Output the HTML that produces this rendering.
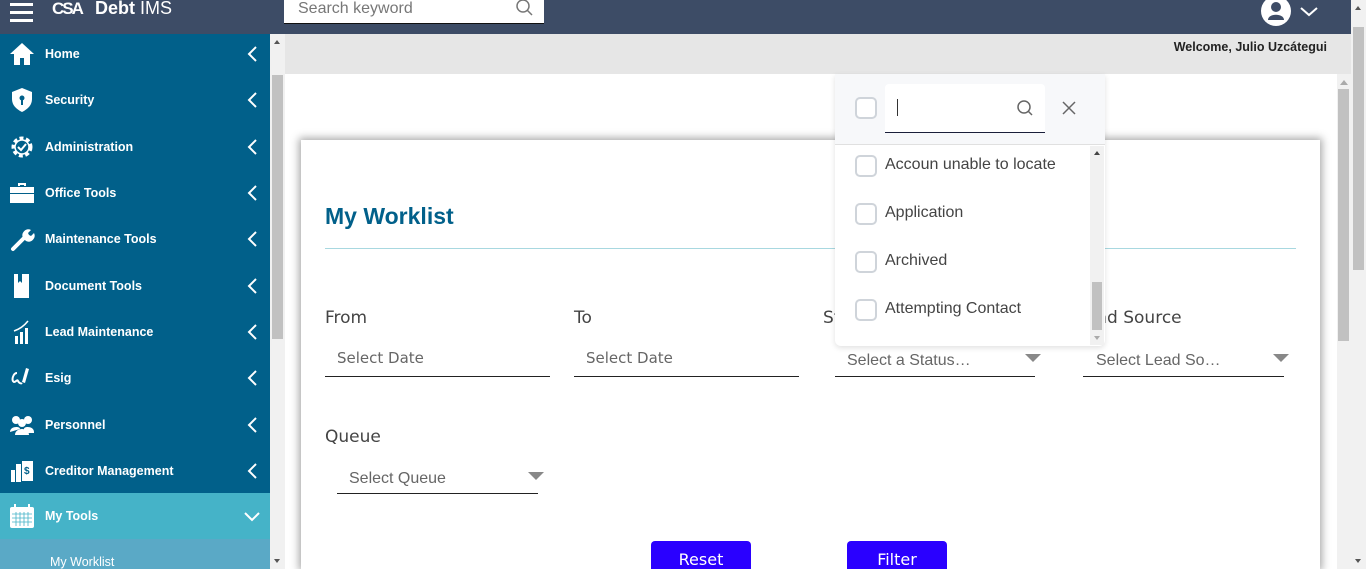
<!DOCTYPE html>
<html style="overflow:hidden"><head><meta charset="utf-8"><style>
*{box-sizing:border-box;margin:0;padding:0}
html,body{width:1366px;height:569px;overflow:hidden}
body{font-family:"DejaVu Sans","Liberation Sans",sans-serif;background:#fff;position:relative}
.hdr{position:absolute;left:0;top:0;width:1351px;height:34px;background:#3d4c66}
.side{position:absolute;left:0;top:34px;width:270px;height:535px;background:#01608a;overflow:hidden}
.item{position:absolute;left:0;width:270px;height:46px;color:#fff;font-size:12.5px;font-weight:bold;font-family:"Liberation Sans",sans-serif}
.item .t{position:absolute;left:45px;top:50%;transform:translateY(-50%)}
.item svg.ic{position:absolute;left:9px;top:50%;transform:translateY(-50%)}
.item .ch{position:absolute;left:246px;top:50%;transform:translateY(-50%)}
.abs{position:absolute}
.lbl{position:absolute;font-size:17px;color:#444}
.ph{position:absolute;font-size:15px;color:#666}
.ph2{position:absolute;font-size:16px;color:#666;font-family:"Liberation Sans",sans-serif}
.line{position:absolute;height:1px;background:#222}
.tri{position:absolute;width:0;height:0;border-left:8px solid transparent;border-right:8px solid transparent;border-top:8px solid #888}
.cb{position:absolute;width:22px;height:22px;border:2px solid #cfd4da;border-radius:5px;background:#fff}
.opt{position:absolute;left:885px;font-size:16px;color:#444;font-family:"Liberation Sans",sans-serif}
</style></head><body>
<div class="hdr">
 <div class="abs" style="left:10px;top:3px;width:23px;height:3px;background:#fff;box-shadow:0 8px 0 #fff,0 16px 0 #fff"></div>
 <div class="abs" style="left:52px;top:-1px;color:#fff;font-size:17px;font-weight:bold;letter-spacing:-2px;font-family:'Liberation Sans',sans-serif">CSA</div>
 <div class="abs" style="left:95px;top:-2px;color:#fff;font-size:18px;font-family:'Liberation Sans',sans-serif"><b>Debt</b> IMS</div>
 <div class="abs" style="left:284px;top:0;width:260px;height:24px;background:#fff;border-bottom:1px solid #111"></div>
 <div class="abs" style="left:298px;top:0;font-size:16px;color:#777;font-family:'Liberation Sans',sans-serif">Search keyword</div>
 <svg class="abs" style="left:514px;top:-2px" width="20" height="20" viewBox="0 0 20 20"><circle cx="9" cy="8" r="6" fill="none" stroke="#777" stroke-width="1.5"/><path d="M13 12l5 5" stroke="#777" stroke-width="1.5"/></svg>
 <svg class="abs" style="left:1261px;top:-4px" width="30" height="30" viewBox="0 0 30 30"><circle cx="15" cy="15" r="15" fill="#fff"/><circle cx="15" cy="11" r="5" fill="#3d4c66"/><path d="M7 24c0-7 16-7 16 0z" fill="#3d4c66"/></svg>
 <svg class="abs" style="left:1299px;top:5px" width="20" height="14" viewBox="0 0 20 14"><path d="M2 3l8 7 8-7" fill="none" stroke="#fff" stroke-width="2"/></svg>
</div>
<div class="side">
 <div class="item" style="top:-3px"><svg class="ic" width="26" height="26" viewBox="0 0 26 26"><path d="M13 2L1 13h4v11h6v-7h4v7h6V13h4z" fill="#fff"/></svg><span class="t">Home</span><svg class="ch" width="12" height="18" viewBox="0 0 12 18"><path d="M10 2L3 9l7 7" fill="none" stroke="#fff" stroke-width="2"/></svg></div>
 <div class="item" style="top:43px"><svg class="ic" width="26" height="26" viewBox="0 0 26 26"><path d="M13 1L3 5v7c0 6 4 10 10 13 6-3 10-7 10-13V5z" fill="#fff"/><circle cx="13" cy="11" r="2.5" fill="#01608a"/><rect x="12" y="12" width="2" height="6" fill="#01608a"/></svg><span class="t">Security</span><svg class="ch" width="12" height="18" viewBox="0 0 12 18"><path d="M10 2L3 9l7 7" fill="none" stroke="#fff" stroke-width="2"/></svg></div>
 <div class="item" style="top:90px"><svg class="ic" width="26" height="26" viewBox="0 0 26 26"><circle cx="13" cy="13" r="9" fill="none" stroke="#fff" stroke-width="3" stroke-dasharray="4 2.6"/><circle cx="13" cy="13" r="7" fill="none" stroke="#fff" stroke-width="1.5"/><path d="M9 13l3 3 5-6" fill="none" stroke="#fff" stroke-width="2"/></svg><span class="t">Administration</span><svg class="ch" width="12" height="18" viewBox="0 0 12 18"><path d="M10 2L3 9l7 7" fill="none" stroke="#fff" stroke-width="2"/></svg></div>
 <div class="item" style="top:136px"><svg class="ic" width="26" height="26" viewBox="0 0 26 26"><path d="M9 3h8v3h-2V5h-4v1H9zM1 7h24v6H1zM1 14h24v9H1z" fill="#fff"/></svg><span class="t">Office Tools</span><svg class="ch" width="12" height="18" viewBox="0 0 12 18"><path d="M10 2L3 9l7 7" fill="none" stroke="#fff" stroke-width="2"/></svg></div>
 <div class="item" style="top:182px"><svg class="ic" width="26" height="26" viewBox="0 0 26 26"><path d="M4 23l11-11" stroke="#fff" stroke-width="4" stroke-linecap="round"/><path d="M14 12a6 6 0 018-8l-3 3 1 2 2 1 3-3a6 6 0 01-8 8z" fill="#fff"/></svg><span class="t">Maintenance Tools</span><svg class="ch" width="12" height="18" viewBox="0 0 12 18"><path d="M10 2L3 9l7 7" fill="none" stroke="#fff" stroke-width="2"/></svg></div>
 <div class="item" style="top:229px"><svg class="ic" width="26" height="26" viewBox="0 0 26 26"><path d="M5 1h15v24H5z" fill="#fff"/><path d="M9 1v9l2-2 2 2V1" fill="#01608a"/></svg><span class="t">Document Tools</span><svg class="ch" width="12" height="18" viewBox="0 0 12 18"><path d="M10 2L3 9l7 7" fill="none" stroke="#fff" stroke-width="2"/></svg></div>
 <div class="item" style="top:275px"><svg class="ic" width="26" height="26" viewBox="0 0 26 26"><path d="M6 17h3v8H6zM11 13h3v12h-3zM16 9h3v16h-3z" fill="#fff"/><path d="M5 12c6-2 10-5 14-10" fill="none" stroke="#fff" stroke-width="1.5"/></svg><span class="t">Lead Maintenance</span><svg class="ch" width="12" height="18" viewBox="0 0 12 18"><path d="M10 2L3 9l7 7" fill="none" stroke="#fff" stroke-width="2"/></svg></div>
 <div class="item" style="top:321px"><svg class="ic" width="26" height="26" viewBox="0 0 26 26"><path d="M8 8c-4 0-6 8-3 9 2 0 3-3 4-1 1 2 3 3 4 2" fill="none" stroke="#fff" stroke-width="2"/><path d="M17 3l3 1-4 14-3-1z" fill="#fff"/></svg><span class="t">Esig</span><svg class="ch" width="12" height="18" viewBox="0 0 12 18"><path d="M10 2L3 9l7 7" fill="none" stroke="#fff" stroke-width="2"/></svg></div>
 <div class="item" style="top:368px"><svg class="ic" width="26" height="26" viewBox="0 0 26 26"><circle cx="7" cy="8" r="4" fill="#fff"/><circle cx="19" cy="8" r="4" fill="#fff"/><circle cx="13" cy="11" r="4" fill="#fff"/><path d="M1 20c0-6 10-6 10-3M15 17c0-3 10-3 10 3v1H15zM6 23c0-8 14-8 14 0z" fill="#fff"/></svg><span class="t">Personnel</span><svg class="ch" width="12" height="18" viewBox="0 0 12 18"><path d="M10 2L3 9l7 7" fill="none" stroke="#fff" stroke-width="2"/></svg></div>
 <div class="item" style="top:414px"><svg class="ic" width="26" height="26" viewBox="0 0 26 26"><path d="M2 12h4v12H2zM7 6h5v18H7z" fill="#fff"/><path d="M13 3h11v20H13z" fill="#fff"/><text x="15" y="16" font-size="10" font-weight="bold" fill="#01608a">$</text></svg><span class="t">Creditor Management</span><svg class="ch" width="12" height="18" viewBox="0 0 12 18"><path d="M10 2L3 9l7 7" fill="none" stroke="#fff" stroke-width="2"/></svg></div>
 <div class="item" style="top:459px;height:46px;background:#45b3c8"><svg class="ic" width="26" height="26" viewBox="0 0 26 26"><rect x="1" y="4" width="24" height="21" rx="2" fill="#fff"/><path d="M6 1v6M20 1v6" stroke="#fff" stroke-width="2"/><path d="M3 11h20M3 15h20M3 19h20M7 9v14M11 9v14M15 9v14M19 9v14" stroke="#45b3c8" stroke-width="0.8"/></svg><span class="t">My Tools</span><svg class="ch" width="18" height="12" viewBox="0 0 18 12" style="left:243px"><path d="M2 3l7 7 7-7" fill="none" stroke="#fff" stroke-width="2"/></svg></div>
 <div class="abs" style="left:0;top:505px;width:270px;height:30px;background:#5aa9c6"></div>
 <div class="abs" style="left:50px;top:521px;color:#fff;font-size:12.5px;font-family:'Liberation Sans',sans-serif">My Worklist</div>
</div>
<div class="abs" style="left:270px;top:34px;width:15px;height:535px;background:#f1f1f1"></div>
<div class="abs" style="left:272px;top:75px;width:11px;height:264px;background:#c1c1c1"></div>
<div class="abs" style="left:274px;top:40px;border-left:3px solid transparent;border-right:3px solid transparent;border-bottom:4px solid #555"></div>
<div class="abs" style="left:274px;top:559px;border-left:3px solid transparent;border-right:3px solid transparent;border-top:4px solid #555"></div>
<div class="abs" style="left:285px;top:34px;width:1066px;height:40px;background:#e6e6e6"></div>
<div class="abs" style="right:39px;top:40px;font-size:12.5px;font-weight:bold;color:#222;font-family:'Liberation Sans',sans-serif">Welcome, Julio Uzcátegui</div>
<div class="abs" style="left:1337px;top:74px;width:14px;height:495px;background:#f1f1f1"></div>
<div class="abs" style="left:1338px;top:89px;width:11px;height:252px;background:#c1c1c1"></div>
<div class="abs" style="left:1340px;top:80px;border-left:4px solid transparent;border-right:4px solid transparent;border-bottom:5px solid #aaa"></div>
<div class="abs" style="left:1351px;top:0;width:15px;height:569px;background:#f1f1f1"></div>
<div class="abs" style="left:1353px;top:27px;width:11px;height:243px;background:#c1c1c1"></div>
<div class="abs" style="left:1355px;top:6px;border-left:3px solid transparent;border-right:3px solid transparent;border-bottom:4px solid #555"></div>
<div class="abs" style="left:1355px;top:559px;border-left:3px solid transparent;border-right:3px solid transparent;border-top:4px solid #555"></div>
<div class="abs" style="left:301px;top:140px;width:1019px;height:429px;background:#fff;box-shadow:0 0 8px 2px rgba(0,0,0,0.35)"></div>
<div class="abs" style="left:325px;top:203px;font-size:23px;font-weight:bold;color:#01608a;font-family:'Liberation Sans',sans-serif">My Worklist</div>
<div class="abs" style="left:325px;top:248px;width:971px;height:1px;background:#a8d8e0"></div>
<div class="lbl" style="left:325px;top:308px">From</div>
<div class="lbl" style="left:574px;top:308px">To</div>
<div class="lbl" style="left:823px;top:308px">Status</div>
<div class="lbl" style="left:1077px;top:308px">Lead Source</div>
<div class="ph" style="left:337px;top:349px">Select Date</div>
<div class="line" style="left:325px;top:376px;width:225px"></div>
<div class="ph" style="left:586px;top:349px">Select Date</div>
<div class="line" style="left:574px;top:376px;width:225px"></div>
<div class="ph2" style="left:847px;top:352px">Select a Status…</div>
<div class="tri" style="left:1025px;top:354px"></div>
<div class="line" style="left:835px;top:376px;width:200px"></div>
<div class="ph2" style="left:1096px;top:352px">Select Lead So…</div>
<div class="tri" style="left:1273px;top:354px"></div>
<div class="line" style="left:1083px;top:376px;width:201px"></div>
<div class="lbl" style="left:325px;top:427px">Queue</div>
<div class="ph2" style="left:349px;top:470px">Select Queue</div>
<div class="tri" style="left:528px;top:472px"></div>
<div class="line" style="left:337px;top:493px;width:201px"></div>
<div class="abs" style="left:651px;top:541px;width:100px;height:28px;background:#2a00ff;border-radius:4px 4px 0 0;color:#fff;font-size:16px;text-align:center;padding-top:9px">Reset</div>
<div class="abs" style="left:847px;top:541px;width:100px;height:28px;background:#2a00ff;border-radius:4px 4px 0 0;color:#fff;font-size:16px;text-align:center;padding-top:9px">Filter</div>
<div class="abs" style="left:835px;top:74px;width:270px;height:272px;background:#fff;border-radius:0 0 6px 6px;box-shadow:0 2px 6px rgba(0,0,0,0.12)"></div>
<div class="abs" style="left:835px;top:74px;width:270px;height:71px;background:#f7f8fa;border-bottom:1px solid #e0e0e0"></div>
<div class="cb" style="left:855px;top:97px"></div>
<div class="abs" style="left:885px;top:84px;width:160px;height:49px;background:#fff;border-bottom:1px solid #1a1f3a;border-radius:4px 4px 0 0"></div>
<div class="abs" style="left:897px;top:99px;width:1px;height:17px;background:#333"></div>
<svg class="abs" style="left:1015px;top:98px" width="20" height="20" viewBox="0 0 20 20"><circle cx="9" cy="9" r="6" fill="none" stroke="#666" stroke-width="1.5"/><path d="M13 13l4 4" stroke="#666" stroke-width="1.5"/></svg>
<svg class="abs" style="left:1061px;top:100px" width="16" height="16" viewBox="0 0 16 16"><path d="M2 2l12 12M14 2L2 14" stroke="#666" stroke-width="1.5"/></svg>
<div class="abs" style="left:1090px;top:146px;width:14px;height:199px;background:#f1f1f1"></div>
<div class="abs" style="left:1092px;top:282px;width:10px;height:48px;background:#c1c1c1"></div>
<div class="abs" style="left:1094px;top:151px;border-left:3px solid transparent;border-right:3px solid transparent;border-bottom:4px solid #444"></div>
<div class="abs" style="left:1094px;top:336px;border-left:3px solid transparent;border-right:3px solid transparent;border-top:4px solid #aaa"></div>
<div class="cb" style="left:855px;top:155px"></div><div class="opt" style="top:156px">Accoun unable to locate</div>
<div class="cb" style="left:855px;top:203px"></div><div class="opt" style="top:204px">Application</div>
<div class="cb" style="left:855px;top:251px"></div><div class="opt" style="top:252px">Archived</div>
<div class="cb" style="left:855px;top:299px"></div><div class="opt" style="top:300px">Attempting Contact</div>
</body></html>
